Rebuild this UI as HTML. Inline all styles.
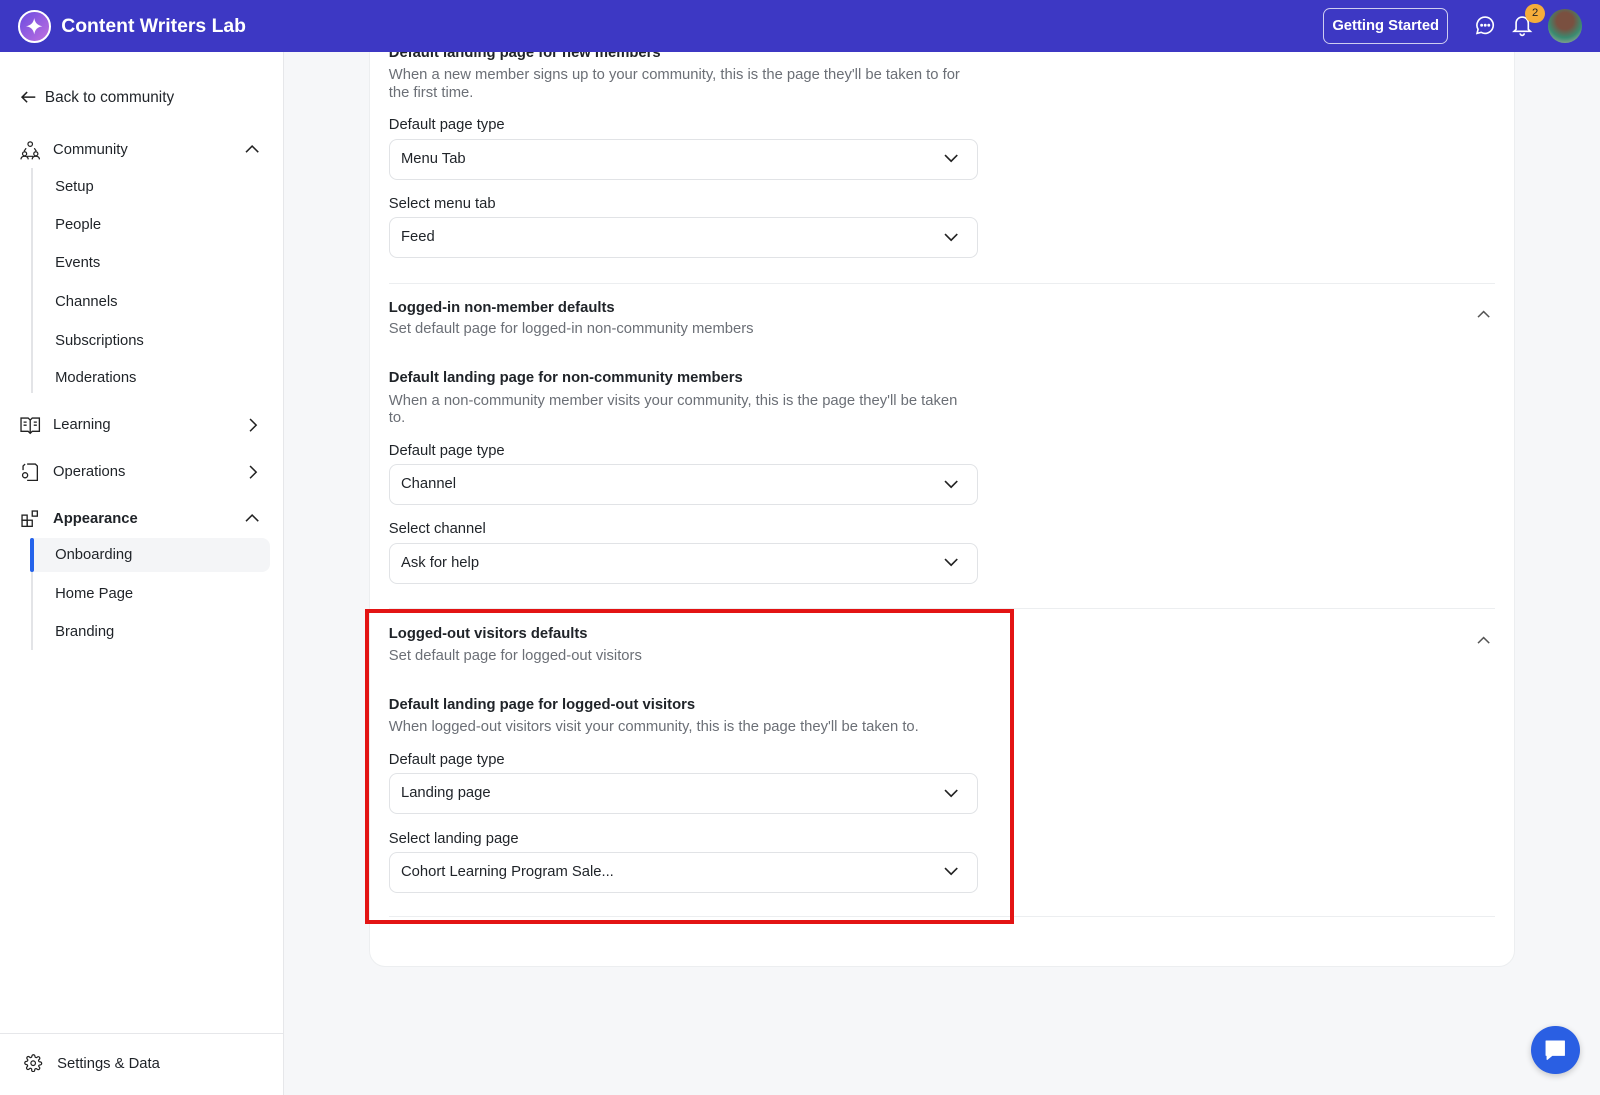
<!DOCTYPE html>
<html><head><meta charset="utf-8">
<style>
*{box-sizing:border-box;margin:0;padding:0}
html,body{width:1600px;height:1095px;overflow:hidden;background:#f6f7f9;font-family:"Liberation Sans",sans-serif;color:#1f2328}
#w{zoom:1.0204;width:1568px;height:1073px;position:relative}
.a{position:absolute}
.hdr{left:0;top:0;width:1568px;height:51px;background:#3d38c4;z-index:5}
.sb{left:0;top:51px;width:278px;height:1022px;background:#fff;border-right:1px solid #e6e7ea}
.t{position:absolute;font-size:14.5px;line-height:16px;white-space:nowrap}
.g{color:#6b6f76}
.b{font-weight:bold}
.sel{position:absolute;left:381px;width:577px;height:40px;border:1px solid #e1e3e6;border-radius:8px;background:#fff;font-size:14.5px;padding-left:11px;line-height:38px}
.sel svg{position:absolute;right:18px;top:13px}
.div{position:absolute;left:381px;width:1084px;height:1px;background:#eceef0}
svg{display:block}
</style></head><body><div id="w">
<div class="a hdr">
  <div class="a" style="left:18px;top:10px;width:32px;height:32px;border-radius:50%;background:linear-gradient(135deg,#6a4be0,#c070e0);border:2px solid #fff"></div>
  <svg class="a" style="left:24px;top:16px" width="20" height="20" viewBox="0 0 20 20"><path d="M10 2 Q11 9 18 10 Q11 11 10 18 Q9 11 2 10 Q9 9 10 2Z" fill="#fff"/></svg>
  <div class="t b" style="left:60px;top:15px;font-size:19px;line-height:22px;color:#fff">Content Writers Lab</div>
  <div class="a" style="left:1297px;top:8px;width:122px;height:35px;border:1px solid rgba(255,255,255,.75);border-radius:7px;color:#fff;font-size:14.5px;display:flex;align-items:center;justify-content:center;font-weight:bold">Getting Started</div>
  <svg class="a" style="left:1446px;top:15px" width="20" height="20" viewBox="0 0 20 20" fill="none" stroke="#fff" stroke-width="1.6"><path d="M10 2a8 8 0 1 1-4 15l-4 1 1-4A8 8 0 0 1 10 2z"/><circle cx="6.5" cy="10" r=".6" fill="#fff"/><circle cx="10" cy="10" r=".6" fill="#fff"/><circle cx="13.5" cy="10" r=".6" fill="#fff"/></svg>
  <svg class="a" style="left:1482px;top:14px" width="20" height="22" viewBox="0 0 20 22" fill="none" stroke="#fff" stroke-width="1.6"><path d="M4 15V9a6 6 0 0 1 12 0v6l2 2H2z"/><path d="M8 19a2 2 0 0 0 4 0"/></svg>
  <div class="a" style="left:1495px;top:4px;width:19px;height:19px;border-radius:50%;background:#f5ad3b;font-size:11px;line-height:19px;text-align:center;color:#222">2</div>
  <div class="a" style="left:1517px;top:9px;width:33px;height:33px;border-radius:50%;background:radial-gradient(circle at 50% 35%,#7a5040 0 30%,#3a8a70 60%,#bfb6a8 100%)"></div>
</div>
<div class="a sb"></div>
<svg class="a" style="left:20px;top:87px" width="16" height="16" viewBox="0 0 16 16" fill="none" stroke="#222" stroke-width="1.5"><path d="M15 8H2M7 3 2 8l5 5"/></svg>
<div class="t" style="left:44px;top:88px;font-size:15px">Back to community</div>
<svg class="a" style="left:20px;top:137px" width="20" height="20" viewBox="0 0 20 20" fill="none" stroke="#222" stroke-width="1.2"><circle cx="10" cy="4" r="2.2"/><circle cx="4.5" cy="13.5" r="2"/><circle cx="15.5" cy="13.5" r="2"/><path d="M1 19c0-2 1.5-3 3.5-3s3.5 1 3.5 3M12 19c0-2 1.5-3 3.5-3s3.5 1 3.5 3M6 8l-2 3M14 8l2 3M7 16h6"/></svg>
<div class="t" style="left:52px;top:139px">Community</div>
<svg class="a" style="left:240px;top:141px" width="14" height="10" viewBox="0 0 14 10" fill="none" stroke="#222" stroke-width="1.5"><path d="M1 8l6-6 6 6"/></svg>
<div class="a" style="left:30px;top:165px;width:2px;height:220px;background:#e3e4e7"></div>
<div class="t" style="left:54px;top:175px">Setup</div>
<div class="t" style="left:54px;top:213px">People</div>
<div class="t" style="left:54px;top:250px">Events</div>
<div class="t" style="left:54px;top:288px">Channels</div>
<div class="t" style="left:54px;top:326px">Subscriptions</div>
<div class="t" style="left:54px;top:363px">Moderations</div>
<svg class="a" style="left:20px;top:408px" width="20" height="18" viewBox="0 0 20 18" fill="none" stroke="#222" stroke-width="1.3"><path d="M1 2h7l2 2 2-2h7v13h-7l-2 2-2-2H1z M10 4v13M3.5 6h3M3.5 9h3M13.5 6h3M13.5 9h3"/></svg>
<div class="t" style="left:52px;top:409px">Learning</div>
<svg class="a" style="left:243px;top:410px" width="10" height="14" viewBox="0 0 10 14" fill="none" stroke="#222" stroke-width="1.5"><path d="M2 1l6 6-6 6"/></svg>
<svg class="a" style="left:20px;top:453px" width="20" height="20" viewBox="0 0 20 20" fill="none" stroke="#222" stroke-width="1.3"><path d="M7 2h8l2 2v14H7M3 8V4l2-2"/><circle cx="5" cy="13" r="2.5"/></svg>
<div class="t" style="left:52px;top:455px">Operations</div>
<svg class="a" style="left:243px;top:456px" width="10" height="14" viewBox="0 0 10 14" fill="none" stroke="#222" stroke-width="1.5"><path d="M2 1l6 6-6 6"/></svg>
<svg class="a" style="left:20px;top:499px" width="20" height="20" viewBox="0 0 20 20" fill="none" stroke="#222" stroke-width="1.3"><rect x="2" y="6" width="5" height="5"/><rect x="2" y="11" width="5" height="6"/><rect x="7" y="11" width="5" height="6"/><rect x="12" y="2" width="5" height="5"/></svg>
<div class="t b" style="left:52px;top:501px">Appearance</div>
<svg class="a" style="left:240px;top:503px" width="14" height="10" viewBox="0 0 14 10" fill="none" stroke="#222" stroke-width="1.5"><path d="M1 8l6-6 6 6"/></svg>
<div class="a" style="left:30px;top:527px;width:2px;height:110px;background:#e3e4e7"></div>
<div class="a" style="left:32px;top:527px;width:233px;height:34px;background:#f4f5f7;border-radius:0 8px 8px 0"></div>
<div class="a" style="left:29px;top:527px;width:4px;height:34px;background:#2563eb;border-radius:2px"></div>
<div class="t" style="left:54px;top:536px">Onboarding</div>
<div class="t" style="left:54px;top:574px">Home Page</div>
<div class="t" style="left:54px;top:612px">Branding</div>
<div class="a" style="left:0;top:1012px;width:278px;height:1px;background:#e6e7ea"></div>
<svg class="a" style="left:24px;top:1033px" width="18" height="18" viewBox="0 0 24 24" fill="none" stroke="#222" stroke-width="1.6"><circle cx="12" cy="12" r="3"/><path d="M19.4 15a1.7 1.7 0 0 0 .3 1.8l.1.1a2 2 0 1 1-2.8 2.8l-.1-.1a1.7 1.7 0 0 0-2.9 1.2V21a2 2 0 1 1-4 0v-.1A1.7 1.7 0 0 0 7 19.4l-.1.1a2 2 0 1 1-2.8-2.8l.1-.1A1.7 1.7 0 0 0 3 13.7H3a2 2 0 1 1 0-4h.1A1.7 1.7 0 0 0 4.6 7l-.1-.1a2 2 0 1 1 2.8-2.8l.1.1A1.7 1.7 0 0 0 10.3 3V3a2 2 0 1 1 4 0v.1a1.7 1.7 0 0 0 2.7 1.3l.1-.1a2 2 0 1 1 2.8 2.8l-.1.1A1.7 1.7 0 0 0 21 10.3h.1a2 2 0 1 1 0 4H21a1.7 1.7 0 0 0-1.6.7z"/></svg>
<div class="t" style="left:56px;top:1035px">Settings &amp; Data</div>

<div class="a" style="left:362px;top:20px;width:1123px;height:928px;background:#fff;border:1px solid #eceef0;border-radius:16px"></div>
<div class="t b" style="left:381px;top:44px">Default landing page for new members</div>
<div class="t g" style="left:381px;top:66px">When a new member signs up to your community, this is the page they'll be taken to for</div>
<div class="t g" style="left:381px;top:83px">the first time.</div>
<div class="t" style="left:381px;top:115px">Default page type</div>
<div class="sel" style="top:136px">Menu Tab<svg width="14" height="10" viewBox="0 0 14 10" fill="none" stroke="#222" stroke-width="1.6"><path d="M1 2l6 6 6-6"/></svg></div>
<div class="t" style="left:381px;top:192px">Select menu tab</div>
<div class="sel" style="top:213px">Feed<svg width="14" height="10" viewBox="0 0 14 10" fill="none" stroke="#222" stroke-width="1.6"><path d="M1 2l6 6 6-6"/></svg></div>
<div class="div" style="top:277px"></div>
<div class="t b" style="left:381px;top:294px">Logged-in non-member defaults</div>
<div class="t g" style="left:381px;top:315px">Set default page for logged-in non-community members</div>
<svg class="a" style="left:1447px;top:304px" width="13" height="8" viewBox="0 0 13 8" fill="none" stroke="#555" stroke-width="1.5"><path d="M1 7l5.5-5.5L12 7"/></svg>
<div class="t b" style="left:381px;top:363px">Default landing page for non-community members</div>
<div class="t g" style="left:381px;top:385px">When a non-community member visits your community, this is the page they'll be taken</div>
<div class="t g" style="left:381px;top:402px">to.</div>
<div class="t" style="left:381px;top:434px">Default page type</div>
<div class="sel" style="top:455px">Channel<svg width="14" height="10" viewBox="0 0 14 10" fill="none" stroke="#222" stroke-width="1.6"><path d="M1 2l6 6 6-6"/></svg></div>
<div class="t" style="left:381px;top:511px">Select channel</div>
<div class="sel" style="top:532px">Ask for help<svg width="14" height="10" viewBox="0 0 14 10" fill="none" stroke="#222" stroke-width="1.6"><path d="M1 2l6 6 6-6"/></svg></div>
<div class="div" style="top:596px"></div>
<div class="t b" style="left:381px;top:613px">Logged-out visitors defaults</div>
<div class="t g" style="left:381px;top:635px">Set default page for logged-out visitors</div>
<svg class="a" style="left:1447px;top:623px" width="13" height="8" viewBox="0 0 13 8" fill="none" stroke="#555" stroke-width="1.5"><path d="M1 7l5.5-5.5L12 7"/></svg>
<div class="t b" style="left:381px;top:683px">Default landing page for logged-out visitors</div>
<div class="t g" style="left:381px;top:705px">When logged-out visitors visit your community, this is the page they'll be taken to.</div>
<div class="t" style="left:381px;top:737px">Default page type</div>
<div class="sel" style="top:758px">Landing page<svg width="14" height="10" viewBox="0 0 14 10" fill="none" stroke="#222" stroke-width="1.6"><path d="M1 2l6 6 6-6"/></svg></div>
<div class="t" style="left:381px;top:814px">Select landing page</div>
<div class="sel" style="top:835px">Cohort Learning Program Sale...<svg width="14" height="10" viewBox="0 0 14 10" fill="none" stroke="#222" stroke-width="1.6"><path d="M1 2l6 6 6-6"/></svg></div>
<div class="div" style="top:898px"></div>
<div class="a" style="left:358px;top:597px;width:636px;height:309px;border:4px solid #e31414"></div>

<div class="a" style="left:1500px;top:1005px;width:48px;height:48px;border-radius:50%;background:#2a5fe3;box-shadow:0 2px 6px rgba(0,0,0,.2)"></div>
<svg class="a" style="left:1512px;top:1017px" width="24" height="24" viewBox="0 0 24 24"><path d="M3 3h18v14H9l-5 4v-4H3z" fill="#fff" stroke="#fff" stroke-width="1" stroke-linejoin="round"/></svg>
</div></body></html>
